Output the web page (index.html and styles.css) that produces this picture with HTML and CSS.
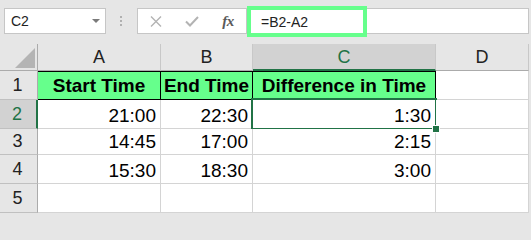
FILE: index.html
```html
<!DOCTYPE html>
<html>
<head>
<meta charset="utf-8">
<link rel="stylesheet" href="styles.css">
</head>
<body>
<div class="toolbar">
  <div class="namebox"><span class="ref">C2</span><span class="caret"></span></div>
  <div class="dots"><i></i><i></i><i></i></div>
  <div class="fbtns">
    <span class="slot"><svg width="12" height="11" viewBox="0 0 12 11"><path d="M1 0.5 L11 10.5 M11 0.5 L1 10.5" stroke="#b3b3b3" stroke-width="1.4" fill="none"/></svg></span>
    <span class="slot"><svg width="14" height="11" viewBox="0 0 14 11"><path d="M1 5.5 L5 9.5 L13 1" stroke="#b3b3b3" stroke-width="2" fill="none"/></svg></span>
    <span class="slot fx">fx</span>
  </div>
  <div class="finput">
    <div class="fhl">=B2-A2</div>
  </div>
</div>
<div class="sheet">
  <div class="corner"><span class="tri"></span></div>
  <div class="ch">A</div>
  <div class="ch">B</div>
  <div class="ch sel">C</div>
  <div class="ch">D</div>

  <div class="rh">1</div>
  <div class="c hd">Start Time</div>
  <div class="c hd">End Time</div>
  <div class="c hd">Difference in Time</div>
  <div class="c"></div>

  <div class="rh sel">2</div>
  <div class="c">21:00</div>
  <div class="c">22:30</div>
  <div class="c active">1:30<span class="handle"></span></div>
  <div class="c"></div>

  <div class="rh">3</div>
  <div class="c">14:45</div>
  <div class="c">17:00</div>
  <div class="c">2:15</div>
  <div class="c"></div>

  <div class="rh">4</div>
  <div class="c">15:30</div>
  <div class="c">18:30</div>
  <div class="c">3:00</div>
  <div class="c"></div>

  <div class="rh">5</div>
  <div class="c"></div>
  <div class="c"></div>
  <div class="c"></div>
  <div class="c"></div>
</div>
</body>
</html>
```
FILE: styles.css
```css
html, body {
  margin: 0;
  padding: 0;
}
body {
  width: 531px;
  height: 214px;
  overflow: hidden;
  background: #e6e6e6;
  font-family: "Liberation Sans", Arial, sans-serif;
}
.toolbar {
  height: 44px;
  box-sizing: border-box;
  padding: 8px 0 0 4px;
  display: flex;
  align-items: flex-start;
}
.namebox {
  width: 102px;
  height: 26px;
  box-sizing: border-box;
  border: 1px solid #c6c6c6;
  background: #fff;
  display: flex;
  align-items: center;
  justify-content: space-between;
  padding: 0 5px 0 6px;
}
.ref {
  font-size: 14px;
  color: #222;
}
.caret {
  width: 0;
  height: 0;
  border-left: 4px solid transparent;
  border-right: 4px solid transparent;
  border-top: 4px solid #7a7a7a;
}
.dots {
  width: 2px;
  margin: 8px 15px 0 14px;
  display: flex;
  flex-direction: column;
  gap: 2px;
}
.dots i {
  display: block;
  width: 2px;
  height: 2px;
  background: #b0b0b0;
}
.fbtns {
  width: 110px;
  height: 26px;
  box-sizing: border-box;
  border: 1px solid #c6c6c6;
  background: #fff;
  display: flex;
  align-items: center;
}
.slot {
  width: 36px;
  height: 24px;
  display: flex;
  align-items: center;
  justify-content: center;
}
.fx {
  font-family: "Liberation Serif", "Times New Roman", serif;
  font-style: italic;
  font-weight: bold;
  font-size: 15px;
  color: #5a5a5a;
  letter-spacing: -0.5px;
}
.finput {
  position: relative;
  width: 282px;
  height: 26px;
  box-sizing: border-box;
  border: 1px solid #c6c6c6;
  border-left: none;
  background: #fff;
}
.fhl {
  position: absolute;
  left: 0;
  top: -3px;
  width: 120px;
  height: 31px;
  box-sizing: border-box;
  border: 4px solid #66ff8c;
  background: #fff;
  padding-left: 10px;
  font-size: 14px;
  color: #222;
  display: flex;
  align-items: center;
}
.sheet {
  display: grid;
  grid-template-columns: 38px 123px 92px 183px 93px;
  grid-template-rows: 27px 29px 29px 26px 29px 29px;
}
.corner {
  background: #e6e6e6;
  border-right: 1px solid #ababab;
  border-bottom: 1px solid #ababab;
  display: flex;
  justify-content: flex-end;
  align-items: flex-end;
  padding: 0 2px 2px 0;
}
.tri {
  display: block;
  width: 20px;
  height: 20px;
  background: #b4b4b4;
  clip-path: polygon(100% 0, 100% 100%, 0 100%);
}
.ch {
  background: #e6e6e6;
  border-right: 1px solid #c8c8c8;
  border-bottom: 1px solid #ababab;
  display: flex;
  align-items: center;
  justify-content: center;
  font-size: 18px;
  color: #222;
  padding-top: 1px;
}
.ch.sel {
  background: #d2d2d2;
  color: #217346;
  border-bottom: 2px solid #217346;
}
.rh {
  background: #e6e6e6;
  border-right: 1px solid #ababab;
  border-bottom: 1px solid #c0c0c0;
  display: flex;
  align-items: center;
  justify-content: center;
  font-size: 18px;
  color: #222;
  padding-right: 2px;
}
.rh.sel {
  background: #d2d2d2;
  color: #217346;
  border-right: 2px solid #217346;
}
.c {
  position: relative;
  background: #fff;
  border-right: 1px solid #d4d4d4;
  border-bottom: 1px solid #d4d4d4;
  display: flex;
  align-items: flex-end;
  justify-content: flex-end;
  padding: 0 4px 1px 0;
  font-size: 19px;
  line-height: 22px;
  color: #000;
}
.c.hd {
  background: #66ff8c;
  border-top: 1px solid #000;
  border-right: 1px solid #000;
  border-bottom: 1px solid #000;
  justify-content: center;
  align-items: center;
  padding: 1px 0 0 0;
  font-weight: bold;
}
.active::after {
  content: "";
  position: absolute;
  left: -2px;
  top: -2px;
  right: -2px;
  bottom: -2px;
  border: 2px solid #217346;
}
.handle {
  position: absolute;
  right: -5px;
  bottom: -5px;
  width: 6px;
  height: 6px;
  background: #217346;
  border: 1px solid #fff;
  z-index: 2;
}
```
